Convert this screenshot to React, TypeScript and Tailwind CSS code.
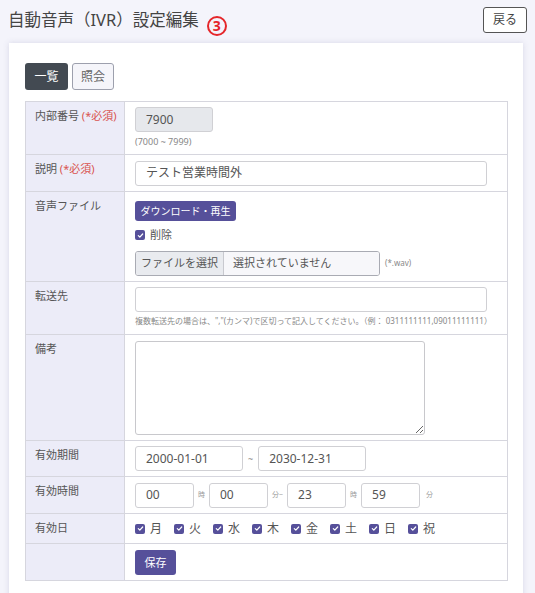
import React from "react";

const font = { fontFamily: '"Noto Sans", "Noto Sans CJK JP", sans-serif' };

function Check() {
  return (
    <span className="inline-flex h-[10px] w-[10px] items-center justify-center rounded-[2px] bg-[#56509a]">
      <svg width="7" height="7" viewBox="0 0 8 8">
        <path d="M1.5 4.2 L3.2 5.8 L6.5 2.3" stroke="white" strokeWidth="1.4" fill="none" strokeLinecap="round" strokeLinejoin="round" />
      </svg>
    </span>
  );
}

function Label({ text, req }: { text: string; req?: boolean }) {
  return (
    <td className="w-[99px] whitespace-nowrap border border-[#d6d6de] bg-[#ececf8] pl-[9px] pr-0 pt-[6px] align-top text-[11px] text-[#555]">
      {text}
      {req && <span className="text-[#d9534f]"> (*必須)</span>}
    </td>
  );
}

function Input({ value, w, disabled }: { value?: string; w: string; disabled?: boolean }) {
  return (
    <div
      className={`flex h-[25px] items-center rounded-[3px] border border-[#d0d0d4] px-[10px] text-[12px] text-[#555] ${w} ${
        disabled ? "bg-[#e6e8ec]" : "bg-white"
      }`}
    >
      {value}
    </div>
  );
}

export default function App() {
  const days = ["月", "火", "水", "木", "金", "土", "日", "祝"];
  return (
    <div className="min-h-[593px] w-[535px] overflow-hidden bg-[#f4f4fb]" style={font}>
      <div className="flex h-[43px] items-start justify-between pl-[8px] pr-[8px] pt-[7px]">
        <div className="flex items-start">
          <span className="pt-[1px] text-[16.5px] leading-[24px] text-[#444]">自動音声（IVR）設定編集</span>
          <span className="ml-[8px] mt-[9px] flex h-[20px] w-[20px] items-center justify-center rounded-full border-2 border-[#e5262a] text-[14px] font-bold leading-none text-[#e5262a]">
            3
          </span>
        </div>
        <button className="h-[26px] w-[44px] rounded-[3px] border border-[#555] bg-white text-[12px] text-[#444]">
          戻る
        </button>
      </div>
      <div className="ml-[9px] w-[514px] bg-white px-[16px] pb-[20px] pt-[20px] shadow-[0_0_6px_rgba(90,90,140,0.18)]">
        <div className="flex gap-[4px]">
          <button className="h-[27px] w-[43px] rounded-[3px] bg-[#434a52] text-[12px] text-white">一覧</button>
          <button className="h-[27px] w-[42px] rounded-[3px] border border-[#9da0ad] bg-[#f5f5fa] text-[12px] text-[#666]">
            照会
          </button>
        </div>
        <table className="mt-[11px] w-[483px] border-collapse">
          <tbody>
            <tr className="h-[53px]">
              <Label text="内部番号" req />
              <td className="border border-[#d6d6de] px-[10px] align-top">
                <div className="pt-[5px]">
                  <Input value="7900" w="w-[78px]" disabled />
                  <div className="mt-[3px] text-[9px] text-[#888]">(7000 ~ 7999)</div>
                </div>
              </td>
            </tr>
            <tr className="h-[37px]">
              <Label text="説明" req />
              <td className="border border-[#d6d6de] px-[10px] align-middle">
                <Input value="テスト営業時間外" w="w-[352px]" />
              </td>
            </tr>
            <tr className="h-[90px]">
              <Label text="音声ファイル" />
              <td className="border border-[#d6d6de] px-[10px] align-top">
                <div className="pt-[9px]">
                  <div className="flex h-[20px] w-[101px] items-center justify-center rounded-[3px] bg-[#56509a] text-[10px] text-white">
                    ダウンロード・再生
                  </div>
                  <div className="mt-[6px] flex items-center gap-[5px] text-[11px] text-[#555]">
                    <Check />
                    削除
                  </div>
                  <div className="mt-[7px] flex items-center">
                    <div className="flex h-[25px] w-[245px] overflow-hidden rounded-[3px] border border-[#a9abb3] text-[11px] text-[#555]">
                      <div className="flex w-[88px] items-center justify-center border-r border-[#c8c9cf] bg-[#e9ebef]">
                        ファイルを選択
                      </div>
                      <div className="flex flex-1 items-center bg-[#f7f7fa] pl-[9px]">選択されていません</div>
                    </div>
                    <span className="ml-[5px] text-[8px] text-[#888]">(*.wav)</span>
                  </div>
                </div>
              </td>
            </tr>
            <tr className="h-[53px]">
              <Label text="転送先" />
              <td className="border border-[#d6d6de] px-[10px] align-top">
                <div className="pt-[5px]">
                  <Input w="w-[352px]" />
                  <div className="mt-[3px] whitespace-nowrap text-[8px] text-[#888]">
                    複数転送先の場合は、","(カンマ)で区切って記入してください。（例： 0311111111,09011111111）
                  </div>
                </div>
              </td>
            </tr>
            <tr className="h-[106px]">
              <Label text="備考" />
              <td className="border border-[#d6d6de] px-[10px] align-middle">
                <textarea
                  readOnly
                  className="block h-[94px] w-[290px] rounded-[3px] border border-[#c8c8cc] bg-white"
                />
              </td>
            </tr>
            <tr className="h-[36px]">
              <Label text="有効期間" />
              <td className="border border-[#d6d6de] px-[10px] align-middle">
                <div className="flex items-center">
                  <Input value="2000-01-01" w="w-[108px]" />
                  <span className="mx-[5px] text-[9px] text-[#888]">~</span>
                  <Input value="2030-12-31" w="w-[108px]" />
                </div>
              </td>
            </tr>
            <tr className="h-[37px]">
              <Label text="有効時間" />
              <td className="border border-[#d6d6de] px-[10px] align-middle">
                <div className="flex items-center">
                  <Input value="00" w="w-[59px]" />
                  <span className="mx-[4px] text-[7px] text-[#999]">時</span>
                  <Input value="00" w="w-[59px]" />
                  <span className="mx-[4px] text-[7px] text-[#999]">分~</span>
                  <Input value="23" w="w-[59px]" />
                  <span className="mx-[4px] text-[7px] text-[#999]">時</span>
                  <Input value="59" w="w-[59px]" />
                  <span className="ml-[6px] text-[7px] text-[#999]">分</span>
                </div>
              </td>
            </tr>
            <tr className="h-[30px]">
              <Label text="有効日" />
              <td className="border border-[#d6d6de] px-[10px] align-middle">
                <div className="flex items-center">
                  {days.map((d) => (
                    <div key={d} className="flex w-[39px] items-center gap-[5px] text-[12px] text-[#555]">
                      <Check />
                      {d}
                    </div>
                  ))}
                </div>
              </td>
            </tr>
            <tr className="h-[37px]">
              <td className="border border-[#d6d6de] bg-[#ececf8]" />
              <td className="border border-[#d6d6de] px-[10px] align-middle">
                <button className="h-[25px] w-[41px] rounded-[3px] bg-[#56509a] text-[11px] text-white">保存</button>
              </td>
            </tr>
          </tbody>
        </table>
      </div>
    </div>
  );
}
